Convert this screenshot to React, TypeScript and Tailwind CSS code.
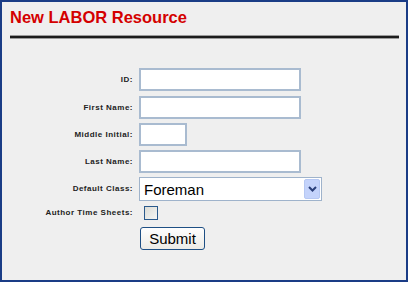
import React from "react";

const labelCls =
  "w-[132px] shrink-0 text-right text-[8px] font-bold tracking-[0.5px] text-[#222] pr-[1px]";
const inputCls =
  "h-[23px] bg-white border-2 border-[#a9bbd0] outline-none";

function Row({ label, children, className }: { label: string; children: React.ReactNode; className?: string }) {
  return (
    <div className={"flex items-center " + (className ?? "")}>
      <div className={labelCls} style={{ fontFamily: '"Liberation Sans", Arial, sans-serif' }}>
        {label}
      </div>
      <div className="ml-[5px] flex items-center">{children}</div>
    </div>
  );
}

export default function App() {
  return (
    <div
      className="w-[408px] h-[282px] bg-[#efefef] border-[2px] border-[#1a3c86] box-border"
      style={{ fontFamily: '"Liberation Sans", Arial, sans-serif' }}
    >
      <div className="pl-[8px] pt-[6px] text-[16.5px] leading-[18px] font-bold text-[#d40000]">
        New LABOR Resource
      </div>
      <div className="ml-[8px] mr-[7px] mt-[9px] h-[4px] bg-[#1c1c1c] border-y border-[#9a9a9a]" />
      <div className="mt-[29px]">
        <Row label="ID:" className="h-[23px]">
          <input className={inputCls + " w-[162px]"} />
        </Row>
        <Row label="First Name:" className="h-[23px] mt-[5px]">
          <input className={inputCls + " w-[162px]"} />
        </Row>
        <Row label="Middle Initial:" className="h-[23px] mt-[4px]">
          <input className={inputCls + " w-[48px]"} />
        </Row>
        <Row label="Last Name:" className="h-[23px] mt-[4px]">
          <input className={inputCls + " w-[162px]"} />
        </Row>
        <Row label="Default Class:" className="h-[24px] mt-[4px]">
          <div className="w-[183px] h-[24px] bg-white border border-[#9fb3cb] flex items-center">
            <span className="flex-1 pl-[4px] text-[15px] text-black leading-none">Foreman</span>
            <div className="w-[16px] h-[20px] mr-[1px] rounded-[2px] bg-[#c4d3fb] border border-[#b6c8f3] flex items-center justify-center">
              <svg width="9" height="6" viewBox="0 0 9 6">
                <path d="M1 1 L4.5 4.5 L8 1" stroke="#2a3f7a" strokeWidth="2" fill="none" />
              </svg>
            </div>
          </div>
        </Row>
        <Row label="Author Time Sheets:" className="h-[16px] mt-[4px]">
          <div className="ml-[5px] w-[14px] h-[14px] border border-[#2b5a8c] bg-gradient-to-br from-[#dcdcd6] to-[#f6f6f4]" />
        </Row>
        <div className="flex mt-[6px]">
          <div className="w-[132px]" />
          <button className="ml-[6px] w-[65px] h-[23px] rounded-[3px] border border-[#1e4f84] bg-gradient-to-b from-[#fefefe] to-[#ecebe6] text-[15px] leading-none text-black">
            Submit
          </button>
        </div>
      </div>
    </div>
  );
}
